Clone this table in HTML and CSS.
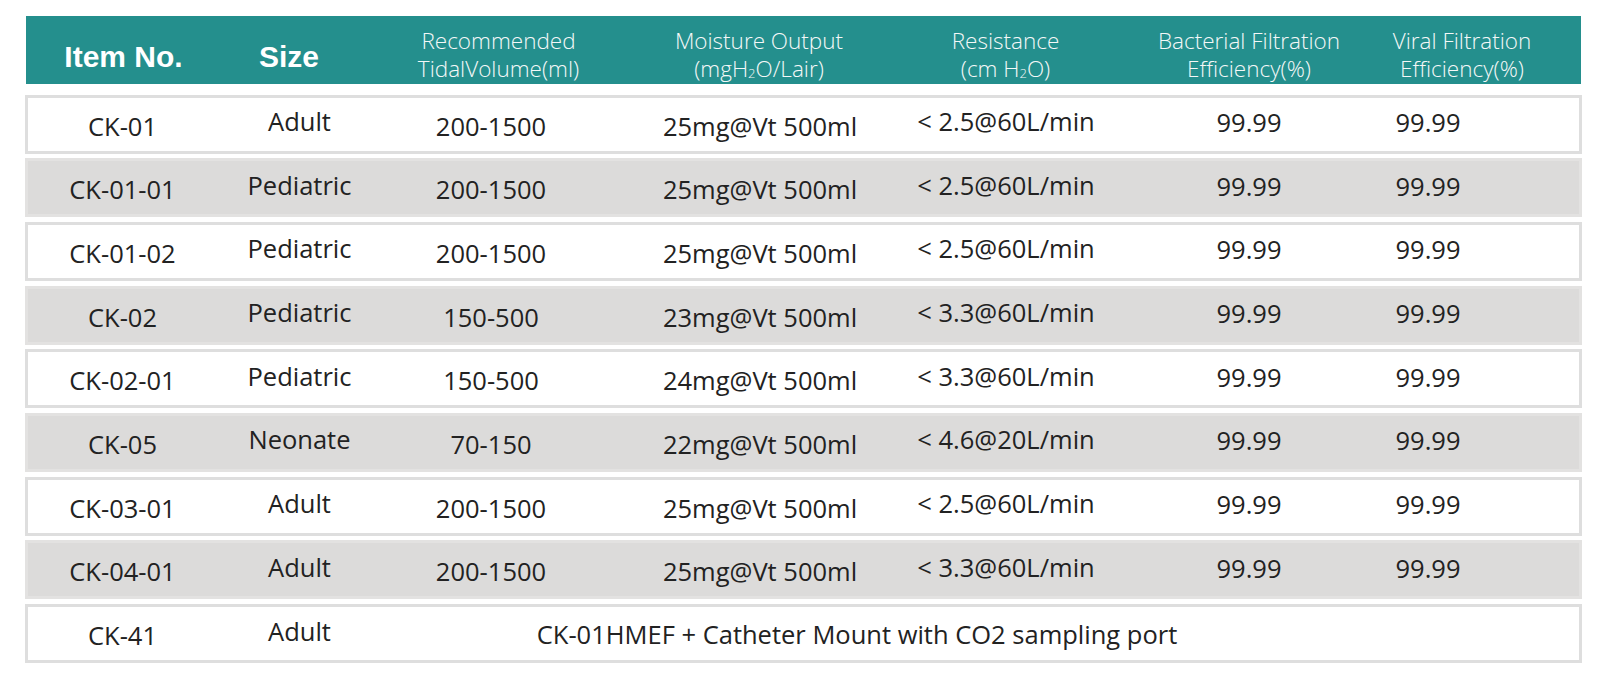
FILE: index.html
```html
<!DOCTYPE html>
<html lang="en">
<head>
<meta charset="utf-8">
<title>HMEF Specifications</title>
<link rel="stylesheet" href="styles.css">
</head>
<body>
<div class="sheet">
  <div class="thead">
    <div class="th th-bold">Item No.</div>
    <div class="th th-bold">Size</div>
    <div class="th">Recommended<br>TidalVolume(ml)</div>
    <div class="th">Moisture Output<br>(mgH<span class="sub">2</span>O/Lair)</div>
    <div class="th">Resistance<br>(cm H<span class="sub">2</span>O)</div>
    <div class="th">Bacterial Filtration<br>Efficiency(%)</div>
    <div class="th">Viral Filtration<br>Efficiency(%)</div>
  </div>
  <div class="rows">
    <div class="row light">
      <div class="td">CK-01</div><div class="td up">Adult</div><div class="td">200-1500</div><div class="td">25mg@Vt 500ml</div><div class="td up">&lt; 2.5@60L/min</div><div class="td up2">99.99</div><div class="td up2">99.99</div>
    </div>
    <div class="row shade">
      <div class="td">CK-01-01</div><div class="td up">Pediatric</div><div class="td">200-1500</div><div class="td">25mg@Vt 500ml</div><div class="td up">&lt; 2.5@60L/min</div><div class="td up2">99.99</div><div class="td up2">99.99</div>
    </div>
    <div class="row light">
      <div class="td">CK-01-02</div><div class="td up">Pediatric</div><div class="td">200-1500</div><div class="td">25mg@Vt 500ml</div><div class="td up">&lt; 2.5@60L/min</div><div class="td up2">99.99</div><div class="td up2">99.99</div>
    </div>
    <div class="row shade">
      <div class="td">CK-02</div><div class="td up">Pediatric</div><div class="td">150-500</div><div class="td">23mg@Vt 500ml</div><div class="td up">&lt; 3.3@60L/min</div><div class="td up2">99.99</div><div class="td up2">99.99</div>
    </div>
    <div class="row light">
      <div class="td">CK-02-01</div><div class="td up">Pediatric</div><div class="td">150-500</div><div class="td">24mg@Vt 500ml</div><div class="td up">&lt; 3.3@60L/min</div><div class="td up2">99.99</div><div class="td up2">99.99</div>
    </div>
    <div class="row shade">
      <div class="td">CK-05</div><div class="td up">Neonate</div><div class="td">70-150</div><div class="td">22mg@Vt 500ml</div><div class="td up">&lt; 4.6@20L/min</div><div class="td up2">99.99</div><div class="td up2">99.99</div>
    </div>
    <div class="row light">
      <div class="td">CK-03-01</div><div class="td up">Adult</div><div class="td">200-1500</div><div class="td">25mg@Vt 500ml</div><div class="td up">&lt; 2.5@60L/min</div><div class="td up2">99.99</div><div class="td up2">99.99</div>
    </div>
    <div class="row shade">
      <div class="td">CK-04-01</div><div class="td up">Adult</div><div class="td">200-1500</div><div class="td">25mg@Vt 500ml</div><div class="td up">&lt; 3.3@60L/min</div><div class="td up2">99.99</div><div class="td up2">99.99</div>
    </div>
    <div class="row light">
      <div class="td">CK-41</div><div class="td up">Adult</div><div class="td wide">CK-01HMEF + Catheter Mount with CO2 sampling port</div>
    </div>
  </div>
</div>
</body>
</html>
```

FILE: styles.css
```css
html, body {
  margin: 0;
  padding: 0;
  background: #ffffff;
}

.sheet {
  padding: 16px 0 0 25px;
  width: 1557px;
}

.thead {
  margin-left: 1px;
  width: 1555px;
  height: 68px;
  box-sizing: border-box;
  padding-top: 10px;
  background: #248f8d;
  display: grid;
  grid-template-columns: 195px 136px 283px 238px 255px 232px 194px;
  align-items: center;
  color: #ffffff;
}

.th {
  display: block;
  text-align: center;
  font-family: "Open Sans", "Noto Sans", sans-serif;
  font-weight: 300;
  font-size: 22.5px;
  line-height: 28px;
  white-space: nowrap;
  color: #f4f8f8;
}

.th-bold {
  font-family: "Liberation Sans", Arial, sans-serif;
  font-weight: 700;
  font-size: 30px;
  line-height: 34px;
  padding-top: 3px;
  color: #ffffff;
}

.sub {
  font-size: 13px;
  line-height: 0;
  vertical-align: -1px;
}

.rows {
  margin-top: 10.5px;
  display: flex;
  flex-direction: column;
  gap: 4.7px;
}

.row {
  height: 59px;
  box-sizing: border-box;
  border: 3px solid #dedede;
  display: grid;
  grid-template-columns: 189px 165px 218px 320px 172px 314px 44px;
  align-items: center;
  font-family: "Open Sans", "Noto Sans", sans-serif;
  font-size: 25.5px;
  color: #222222;
}

.row.shade {
  background: #dcdbda;
  border-color: #e3e2e1;
}

.td {
  display: flex;
  justify-content: center;
  white-space: nowrap;
  padding-top: 3px;
}

.td.up {
  padding-top: 0;
  padding-bottom: 6px;
}

.td.up2 {
  padding-top: 0;
  padding-bottom: 4px;
}

.td.wide {
  grid-column: 3 / 8;
  padding-right: 118px;
  padding-top: 1px;
}
```
